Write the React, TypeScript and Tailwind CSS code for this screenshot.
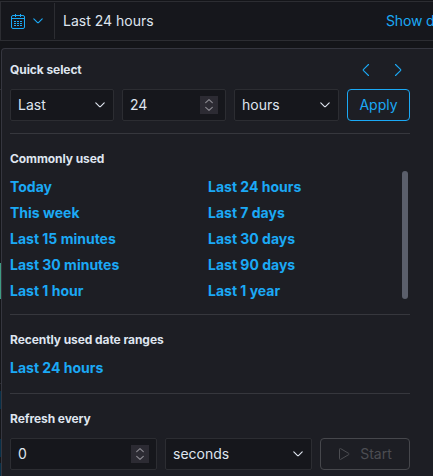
import React from 'react';

const commonlyUsed = [
    ["Today", "Last 24 hours"],
    ["This week", "Last 7 days"],
    ["Last 15 minutes", "Last 30 days"],
    ["Last 30 minutes", "Last 90 days"],
    ["Last 1 hour", "Last 1 year"],
];

const ChevronDown = ({ className }: { className?: string }) => (
    <svg width="10" height="6" viewBox="0 0 10 6" fill="none" stroke="currentColor" strokeWidth="1.15" strokeLinecap="round" strokeLinejoin="round" className={className}>
        <path d="M.8.8 4.3 4.3a1 1 0 0 0 1.4 0L9.2.8" />
    </svg>
);

const CalendarIcon = () => (
    <svg width="16" height="16" viewBox="0 0 16 16" fill="none" stroke="currentColor">
        <rect x="1.5" y="2.5" width="13" height="13" rx="1.5" />
        <path d="M1.5 5.5h13M5.5 1v3M10.5 1v3" />
        <path d="M4 8.5h2M7 8.5h2M10 8.5h2M4 10.5h2M7 10.5h2M10 10.5h2M4 12.5h2M7 12.5h2M10 12.5h2" />
    </svg>
);

const Arrow = ({ d }: { d: string }) => (
    <svg width="8" height="14" viewBox="0 0 8 14" fill="none" stroke="currentColor" strokeWidth="1.15" strokeLinecap="round" strokeLinejoin="round">
        <path d={d} />
    </svg>
);

const SelectField = ({ value, className }: { value: string, className: string }) => (
    <button className={`flex h-8 items-center justify-between rounded-xs border border-[#2c2d32] bg-[#16171c] pl-[7px] pr-2 text-[#dfe5ef] ${className}`}>
        <span>{value}</span>
        <ChevronDown />
    </button>
);

const NumberField = ({ value, className }: { value: string, className: string }) => (
    <div className={`flex h-8 items-center justify-between rounded-xs border border-[#2c2d32] bg-[#16171c] pl-[7px] pr-[7px] text-[#dfe5ef] ${className}`}>
        <span>{value}</span>
        <span className="flex h-[18px] w-[18px] items-center justify-center bg-[#2c2b33] text-[#8a8990]">
            <svg width="10" height="14" viewBox="0 0 10 14" fill="none" stroke="currentColor" strokeWidth="1.2" strokeLinecap="round" strokeLinejoin="round">
                <path d="M1.7 4.6 5 1.6l3.3 3M1.7 9.4 5 12.4l3.3-3" />
            </svg>
        </span>
    </div>
);

const Title = ({ children }: { children: React.ReactNode }) => (
    <h3 className="text-[12px] leading-[18px] font-bold tracking-[-0.08px] text-[#dfe5ef]">{children}</h3>
);

const RangeLink = ({ children }: { children: React.ReactNode }) => (
    <a className="block text-[14px] leading-[18px] font-bold text-[#1ba9f5]">{children}</a>
);

const Divider = ({ className }: { className: string }) => (
    <hr className={`border-0 h-px bg-[#36373d] ${className}`} />
);

const App: React.FC = () => {
    return (
        <div className="flex h-[476px] w-[433px] flex-col overflow-hidden bg-[#141519] pt-px font-['Inter',sans-serif] text-[14px] leading-5">
            <div className="flex h-10 shrink-0 items-center border-y border-l border-[#2c2d32] bg-[#16171c]">
                <button className="flex h-9 w-[54px] items-center gap-[7px] border-r border-[#2c2d32] pl-[9px] text-[#1ba9f5]">
                    <CalendarIcon />
                    <ChevronDown />
                </button>
                <span className="pl-2 text-[#dfe5ef]">Last 24 hours</span>
                <span className="ml-auto w-[47px] overflow-hidden whitespace-nowrap tracking-[-0.15px] text-[#1ba9f5]">Show d</span>
            </div>

            <div className="mt-[7px] flex min-h-0 flex-1">
                {/* sliver of the dashboard left uncovered by the popover */}
                <div className="flex w-px shrink-0 flex-col">
                    <div className="mt-[41px] h-px bg-[#2c2d32]" />
                    <div className="mt-[173px] h-9 bg-[#3f9c83]" />
                    <div className="mt-[84px] h-px bg-[#2c2d32]" />
                    <div className="mt-[7px] h-[18px] bg-[#073049]" />
                    <div className="mt-[30px] h-[18px] bg-[#073049]" />
                    <div className="mt-[6px] flex-1 bg-[#073049]" />
                </div>

                <div className="flex-1 rounded-tl border-t border-l border-[#35363f] bg-[#1d1e24] pt-3 pr-[23px] pl-2">
                    <div className="flex h-[18px] items-center justify-between">
                        <Title>Quick select</Title>
                        <div className="flex gap-6 pr-2 text-[#1ba9f5]">
                            <Arrow d="M6.5 1.5 1.5 6.3a1 1 0 0 0 0 1.4l5 4.8" />
                            <Arrow d="m1.5 1.5 5 4.8a1 1 0 0 1 0 1.4l-5 4.8" />
                        </div>
                    </div>
                    <div className="mt-[10px] flex gap-2">
                        <SelectField value="Last" className="w-[104px]" />
                        <NumberField value="24" className="w-[104px]" />
                        <SelectField value="hours" className="w-[105px]" />
                        <button className="h-8 flex-1 rounded border border-[#1ba9f5] text-[#1ba9f5]">Apply</button>
                    </div>

                    <Divider className="mt-3" />

                    <div className="mt-4">
                        <Title>Commonly used</Title>
                        <div className="mt-[3px] flex h-32 justify-between pr-[2px]">
                            <div className="grid flex-1 grid-cols-[198px_1fr] content-start gap-y-2 pt-[7px]">
                                {commonlyUsed.flat().map((range) => (
                                    <RangeLink key={range}>{range}</RangeLink>
                                ))}
                            </div>
                            <div className="w-[6px] rounded-full bg-[#5b5f6b]" />
                        </div>
                    </div>

                    <Divider className="mt-[15px]" />

                    <div className="mt-4">
                        <Title>Recently used date ranges</Title>
                        <div className="mt-[10px]">
                            <RangeLink>Last 24 hours</RangeLink>
                        </div>
                    </div>

                    <Divider className="mt-4" />

                    <div className="mt-4">
                        <Title>Refresh every</Title>
                        <div className="mt-[10px] flex gap-2">
                            <NumberField value="0" className="w-[147px]" />
                            <SelectField value="seconds" className="w-[147px]" />
                            <button className="flex h-8 flex-1 items-center justify-center gap-[10px] rounded border border-[#46474c] text-[#4c4d52]">
                                <svg width="12" height="14" viewBox="0 0 12 14" fill="none" stroke="currentColor" strokeLinejoin="round">
                                    <path d="M1.5 2.2v9.6c0 .6.6.9 1.1.6l8-4.7a.8.8 0 0 0 0-1.4l-8-4.7c-.5-.3-1.1 0-1.1.6Z" />
                                </svg>
                                Start
                            </button>
                        </div>
                    </div>
                </div>
            </div>
        </div>
    );
};

export default App;
